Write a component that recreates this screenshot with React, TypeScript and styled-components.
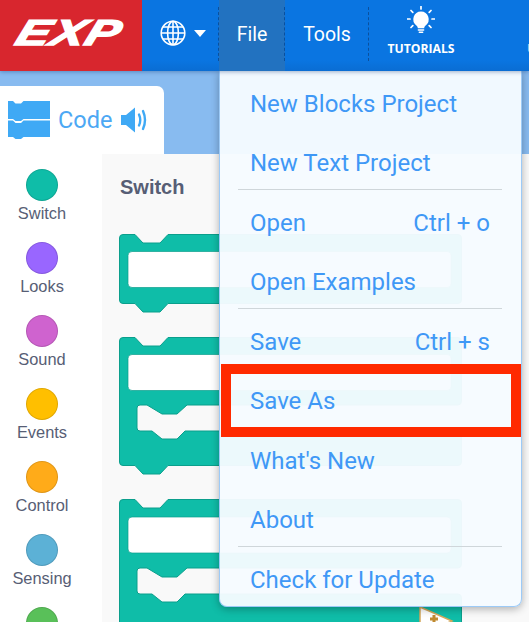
import React from "react";
import styled, { createGlobalStyle } from "styled-components";

const GlobalStyle = createGlobalStyle`
  html, body { margin: 0; padding: 0; background: #f9f9f9; }
  * { box-sizing: border-box; }
`;

const Page = styled.div`
  width: 529px;
  height: 622px;
  overflow: hidden;
  position: relative;
  display: flex;
  flex-direction: column;
  background: #88bbf0;
  font-family: Roboto, "Liberation Sans", sans-serif;
`;

const TopBar = styled.header`
  height: 71px;
  flex: none;
  display: flex;
  background: linear-gradient(#0a75e1 85%, #0a6dd3);
  box-shadow: 0 1px 4px rgba(0, 40, 100, 0.35);
  position: relative;
  z-index: 2;
`;

const LogoBox = styled.div`
  width: 142px;
  flex: none;
  background: #d8262e;
  display: flex;
  align-items: center;
  justify-content: center;
  padding: 0 2px 5px 0;
`;

const LogoText = styled.span`
  font-family: "Liberation Sans", sans-serif;
  font-weight: 700;
  font-style: italic;
  font-size: 36px;
  color: #fff;
  letter-spacing: 1px;
  -webkit-text-stroke: 1.6px #fff;
  transform: scaleX(1.38) skewX(-14deg);
`;

const LangButton = styled.div`
  width: 77px;
  flex: none;
  display: flex;
  align-items: center;
  gap: 8px;
  padding: 0 0 5px 18px;
`;

const Caret = styled.span`
  width: 0;
  height: 0;
  border-left: 6.5px solid transparent;
  border-right: 6.5px solid transparent;
  border-top: 7px solid #fff;
`;

const NavItem = styled.div<{ $width: number; $active?: boolean }>`
  width: ${(p) => p.$width}px;
  flex: none;
  position: relative;
  display: flex;
  align-items: center;
  justify-content: center;
  padding-bottom: 3px;
  color: #fff;
  font-size: 19.5px;
  background: ${(p) => (p.$active ? "#2272c0" : "transparent")};
  &::before {
    content: "";
    position: absolute;
    left: -1px;
    top: 7px;
    bottom: 10px;
    border-left: 1px dashed #0b4f9c;
  }
`;

const ToolItem = styled.div<{ $offset?: number }>`
  flex: none;
  align-self: flex-start;
  display: flex;
  flex-direction: column;
  align-items: center;
  padding: 6px 18px 0 18px;
  margin-left: ${(p) => p.$offset ?? 0}px;
`;

const ToolLabel = styled.span<{ $dim?: boolean }>`
  font-family: "Open Sans", sans-serif;
  font-weight: 700;
  font-size: 12.2px;
  line-height: 16px;
  margin-top: 7px;
  color: ${(p) => (p.$dim ? "#a9cdf3" : "#fff")};
`;

const IconSpacer = styled.div`
  height: 28px;
`;

const Body = styled.div`
  flex: 1;
  display: flex;
  flex-direction: column;
  padding-top: 15px;
  min-height: 0;
`;

const Tab = styled.div`
  width: 164px;
  height: 68px;
  flex: none;
  background: #fff;
  border-radius: 0 7px 0 0;
  display: flex;
  align-items: center;
  padding-left: 8px;
  color: #4ca8f4;
  font-size: 23.5px;
`;

const TabLabel = styled.span`
  margin: 0 9px 0 8px;
`;

const Workspace = styled.div`
  flex: 1;
  display: flex;
  min-height: 0;
`;

const Sidebar = styled.nav`
  width: 102px;
  flex: none;
  background: #fff;
  padding: 15px 18px 0 0;
  display: flex;
  flex-direction: column;
  align-items: center;
`;

const Category = styled.div`
  height: 73px;
  flex: none;
  display: flex;
  flex-direction: column;
  align-items: center;
`;

const Dot = styled.span<{ $color: string }>`
  width: 32px;
  height: 32px;
  border-radius: 50%;
  background: ${(p) => p.$color};
  border: 1px solid rgba(0, 0, 0, 0.12);
`;

const CategoryLabel = styled.span`
  font-family: "Liberation Sans", Arial, sans-serif;
  font-size: 16.4px;
  line-height: 18px;
  margin-top: 3px;
  color: #575e75;
`;

const Palette = styled.section`
  flex: 1;
  background: #f9f9f9;
  padding: 20px 0 0 17px;
  display: flex;
  flex-direction: column;
  gap: 24px;
`;

const PaletteTitle = styled.h2`
  font-family: "Liberation Sans", Arial, sans-serif;
  font-size: 20px;
  line-height: 26px;
  font-weight: 700;
  color: #575e75;
  margin: 0 0 10px 1px;
`;

const Menu = styled.div`
  position: absolute;
  left: 219px;
  top: 71px;
  width: 303px;
  height: 536px;
  background: rgba(246, 251, 255, 0.96);
  border: 1px solid #9ccaf7;
  border-top: 0;
  border-radius: 0 0 8px 8px;
  box-shadow: 0 2px 8px rgba(0, 0, 0, 0.3);
  z-index: 1;
`;

const MenuItem = styled.div<{ $divider?: boolean }>`
  position: relative;
  height: 59.5px;
  padding: 6.5px 31px 0 30px;
  display: flex;
  justify-content: space-between;
  line-height: 53px;
  font-size: 24px;
  color: #3f98f6;
  white-space: nowrap;
  &::after {
    content: "";
    display: ${(p) => (p.$divider ? "block" : "none")};
    position: absolute;
    left: 18px;
    right: 19px;
    bottom: 0;
    height: 1px;
    background: #cfd6da;
  }
`;

const Highlight = styled.div`
  position: absolute;
  left: 1px;
  right: 0;
  top: -5px;
  bottom: -8.5px;
  border: 10px solid #ff2a00;
`;

const LogoGlobe = () => (
  <svg width="26" height="26" viewBox="0 0 26 26" fill="none" stroke="#fff" strokeWidth="1.6">
    <circle cx="13" cy="13" r="11.8" />
    <ellipse cx="13" cy="13" rx="5.4" ry="11.8" />
    <path d="M13 1.2V24.8M1.2 13H24.8M3 7H23M3 19H23" />
  </svg>
);

const Bulb = () => (
  <svg width="28" height="28" viewBox="0 0 28 28" fill="#fff">
    <path d="M14 5.5a7.8 7.8 0 0 0-4.6 14c1 .9 1.3 1.7 1.4 2.7h6.4c.1-1 .4-1.8 1.4-2.7A7.8 7.8 0 0 0 14 5.5Z" />
    <rect x="10.6" y="23.2" width="6.8" height="1.6" rx=".8" />
    <rect x="11.6" y="25.6" width="4.8" height="1.4" rx=".7" />
    <path
      d="M14 .5V3M4 4.500 5.800 6.300M24 4.500 22.200 6.300M.5 13H3M25 13h2.500M4 21.500 5.800 19.700M24 21.500 22.200 19.700"
      stroke="#fff"
      strokeWidth="1.700"
      strokeLinecap="round"
    />
  </svg>
);

const CodeIcon = () => (
  <svg width="42" height="38" viewBox="0 0 42 38" fill="#3fa9f5">
    <path d="M0 0H5L7.500 2.500H13L15.500 0H42V18H15.500L13 20H7.500L5 18H0Z" />
    <path d="M0 19.500H5L7.500 22H13L15.500 19.500H42V36H15.500L13 38H7.500L5 36H0Z" />
  </svg>
);

const SpeakerIcon = () => (
  <svg width="29" height="26" viewBox="0 0 29 26" fill="none">
    <path d="M0 8H5L14 .5V25.500L5 18H0Z" fill="#3fa9f5" />
    <path d="M18 7.500Q20.500 13 18 18.500M22 4Q26 13 22 22" stroke="#3fa9f5" strokeWidth="2.400" strokeLinecap="round" />
  </svg>
);

const TEAL = "#0fbda8";
const EDGE = "#0b9f8c";
const W = 343;
const R = W - 0.5;

// the open slot makes the block a C: upper arm, left wall, lower arm
const slotEdge = (s: number) =>
  `V${s - 4}Q${R} ${s} ${R - 3.5} ${s}H68L58 ${s + 9}H43L28 ${s}H21Q18 ${s} 18 ${s + 3}V${s + 23}Q18 ${s + 26} 21 ${s + 26}H33L43 ${s + 34}H58L66 ${s + 26}H${R - 3.5}Q${R} ${s + 26} ${R} ${s + 30}`;

const outerPath = (h: number, slotY?: number) =>
  `M4 .5H16L24 9H41L49 .5H${R - 3.5}Q${R} .5 ${R} 4${slotY !== undefined ? slotEdge(slotY) : ""}V${h - 13}Q${R} ${h - 9.5} ${R - 3.5} ${h - 9.5}H49L41 ${h - 1}H24L16 ${h - 9.5}H4Q.5 ${h - 9.5} .5 ${h - 13}V4Q.5 .5 4 .5Z`;

const SwitchBlock = ({
  height,
  inputY,
  slotY,
  flag,
}: {
  height: number;
  inputY: number;
  slotY?: number;
  flag?: boolean;
}) => (
  <svg width={W} height={height} viewBox={`0 0 ${W} ${height}`} style={{ flex: "none", display: "block" }}>
    <path d={outerPath(height, slotY)} fill={TEAL} stroke={EDGE} />
    <rect x="9" y={inputY} width="323" height="36" rx="4" fill="#fff" stroke={EDGE} strokeWidth=".7" />
    {flag && (
      <g>
        <path d="M301 108 333 122 301 136Z" fill="#fff" stroke="#d3a85c" strokeWidth="1.500" />
        <path d="M311 120H319M315 116V124" stroke="#c08a30" strokeWidth="3" />
      </g>
    )}
  </svg>
);

const categories = [
  { name: "Switch", color: "#0fbda8" },
  { name: "Looks", color: "#9966ff" },
  { name: "Sound", color: "#cf63cf" },
  { name: "Events", color: "#ffbf00" },
  { name: "Control", color: "#ffab19" },
  { name: "Sensing", color: "#5cb1d6" },
  { name: "", color: "#59c059" },
];

const menuItems = [
  { label: "New Blocks Project" },
  { label: "New Text Project", divider: true },
  { label: "Open", shortcut: "Ctrl + o" },
  { label: "Open Examples", divider: true },
  { label: "Save", shortcut: "Ctrl + s" },
  { label: "Save As", marked: true },
  { label: "What's New" },
  { label: "About", divider: true },
  { label: "Check for Update" },
];

export default function App() {
  return (
    <Page>
      <GlobalStyle />
      <TopBar>
        <LogoBox>
          <LogoText>EXP</LogoText>
        </LogoBox>
        <LangButton>
          <LogoGlobe />
          <Caret />
        </LangButton>
        <NavItem $width={66} $active>
          File
        </NavItem>
        <NavItem $width={84}>Tools</NavItem>
        <NavItem $width={104}>
          <ToolItem>
            <Bulb />
            <ToolLabel>TUTORIALS</ToolLabel>
          </ToolItem>
        </NavItem>
        <ToolItem $offset={36}>
          <IconSpacer />
          <ToolLabel $dim>UPDATE</ToolLabel>
        </ToolItem>
      </TopBar>
      <Body>
        <Tab>
          <CodeIcon />
          <TabLabel>Code</TabLabel>
          <SpeakerIcon />
        </Tab>
        <Workspace>
          <Sidebar>
            {categories.map((c) => (
              <Category key={c.color}>
                <Dot $color={c.color} />
                {c.name && <CategoryLabel>{c.name}</CategoryLabel>}
              </Category>
            ))}
          </Sidebar>
          <Palette>
            <PaletteTitle>Switch</PaletteTitle>
            <SwitchBlock height={79} inputY={17.5} />
            <SwitchBlock height={138} inputY={17.5} slotY={68} />
            <SwitchBlock height={190} inputY={18} slotY={69} flag />
          </Palette>
        </Workspace>
      </Body>
      <Menu>
        {menuItems.map((item) => (
          <MenuItem key={item.label} $divider={item.divider}>
            <span>{item.label}</span>
            {item.shortcut && <span>{item.shortcut}</span>}
            {item.marked && <Highlight />}
          </MenuItem>
        ))}
      </Menu>
    </Page>
  );
}
